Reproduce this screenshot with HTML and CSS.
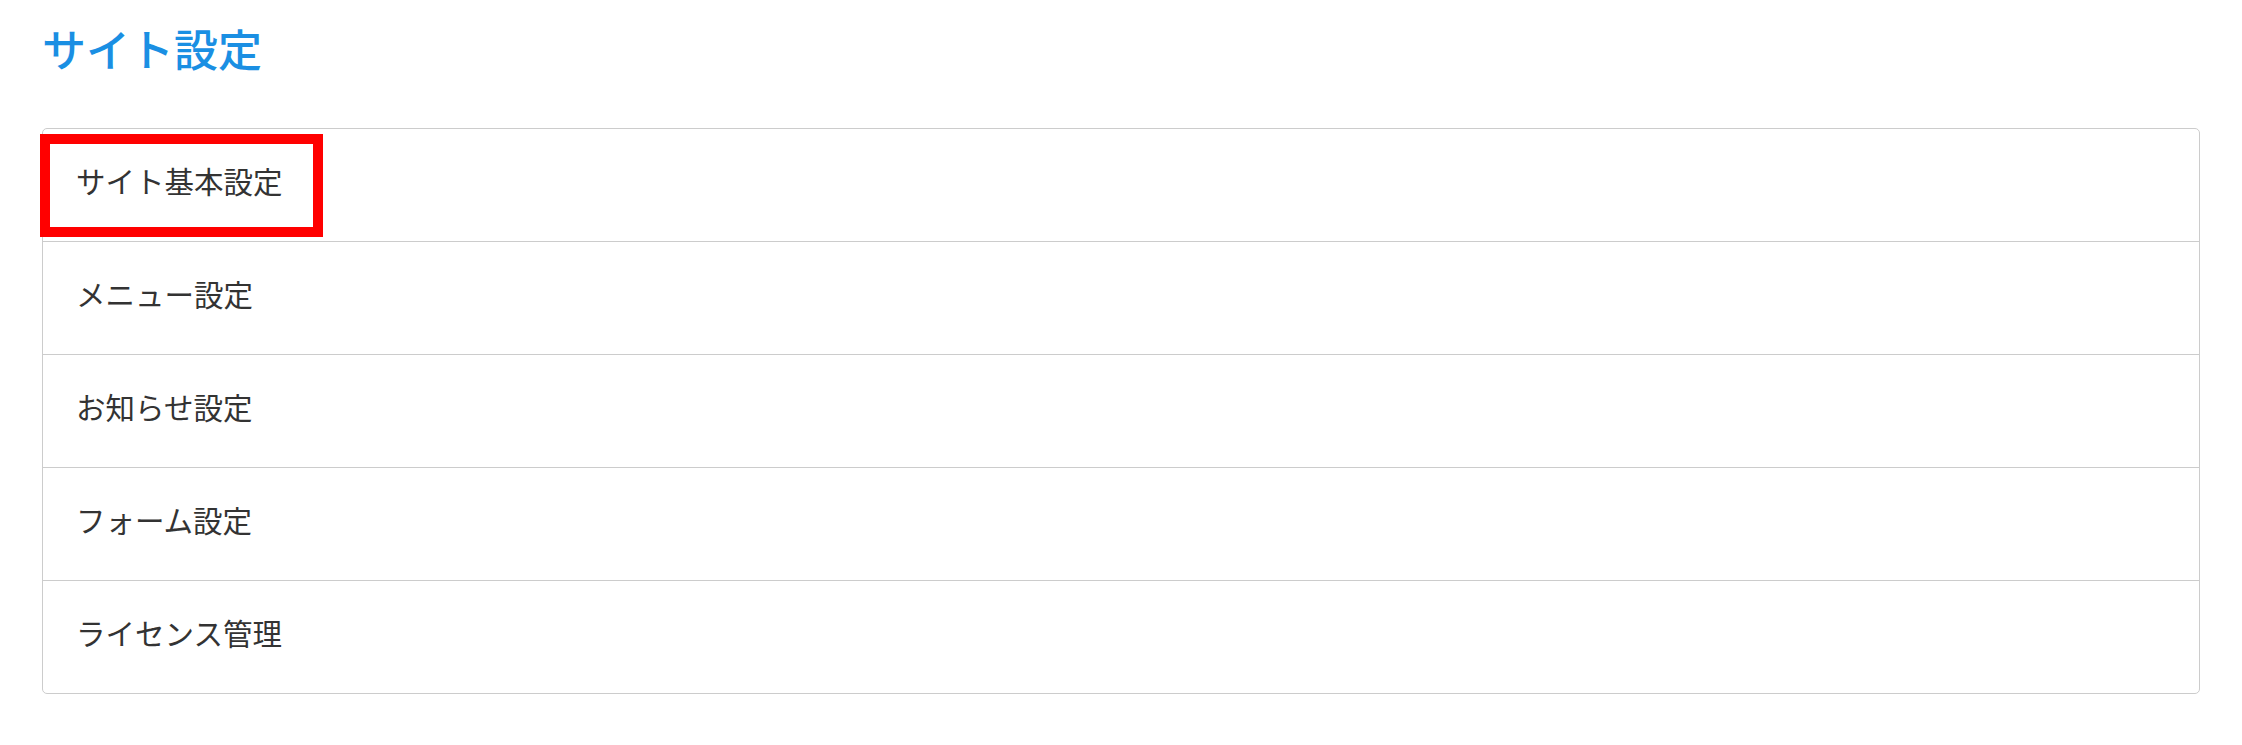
FILE: index.html
```html
<!DOCTYPE html>
<html lang="ja">
<head>
<meta charset="utf-8">
<title>サイト設定</title>
<link rel="stylesheet" href="styles.css">
</head>
<body>
<main class="page">
  <h1 class="page-title">サイト設定</h1>
  <ul class="settings-list">
    <li class="settings-item is-highlighted"><span class="highlight-box"></span>サイト基本設定</li>
    <li class="settings-item">メニュー設定</li>
    <li class="settings-item">お知らせ設定</li>
    <li class="settings-item">フォーム設定</li>
    <li class="settings-item">ライセンス管理</li>
  </ul>
</main>
</body>
</html>
```
FILE: styles.css
```css
html, body {
  margin: 0;
  padding: 0;
  background: #ffffff;
}
body {
  font-family: "Noto Sans CJK JP", "Noto Sans", sans-serif;
  color: #333333;
}
.page {
  padding: 18px 42px 0 42px;
}
.page-title {
  margin: 0 0 50px 0;
  font-size: 44px;
  line-height: 60px;
  font-weight: 500;
  color: #1a8fe3;
}
.settings-list {
  list-style: none;
  margin: 0;
  padding: 0;
  border: 1px solid #cccccc;
  border-radius: 5px;
}
.settings-item {
  position: relative;
  display: flex;
  align-items: center;
  height: 112px;
  box-sizing: border-box;
  padding: 0 0 10px 33px;
  font-size: 29.5px;
  border-top: 1px solid #cccccc;
}
.settings-item:first-child {
  height: 112px;
  border-top: none;
}
.settings-item + .settings-item {
  height: 113px;
}
.highlight-box {
  position: absolute;
  left: -3px;
  top: 5px;
  width: 263px;
  height: 83px;
  border: 10px solid #ff0000;
}
```
